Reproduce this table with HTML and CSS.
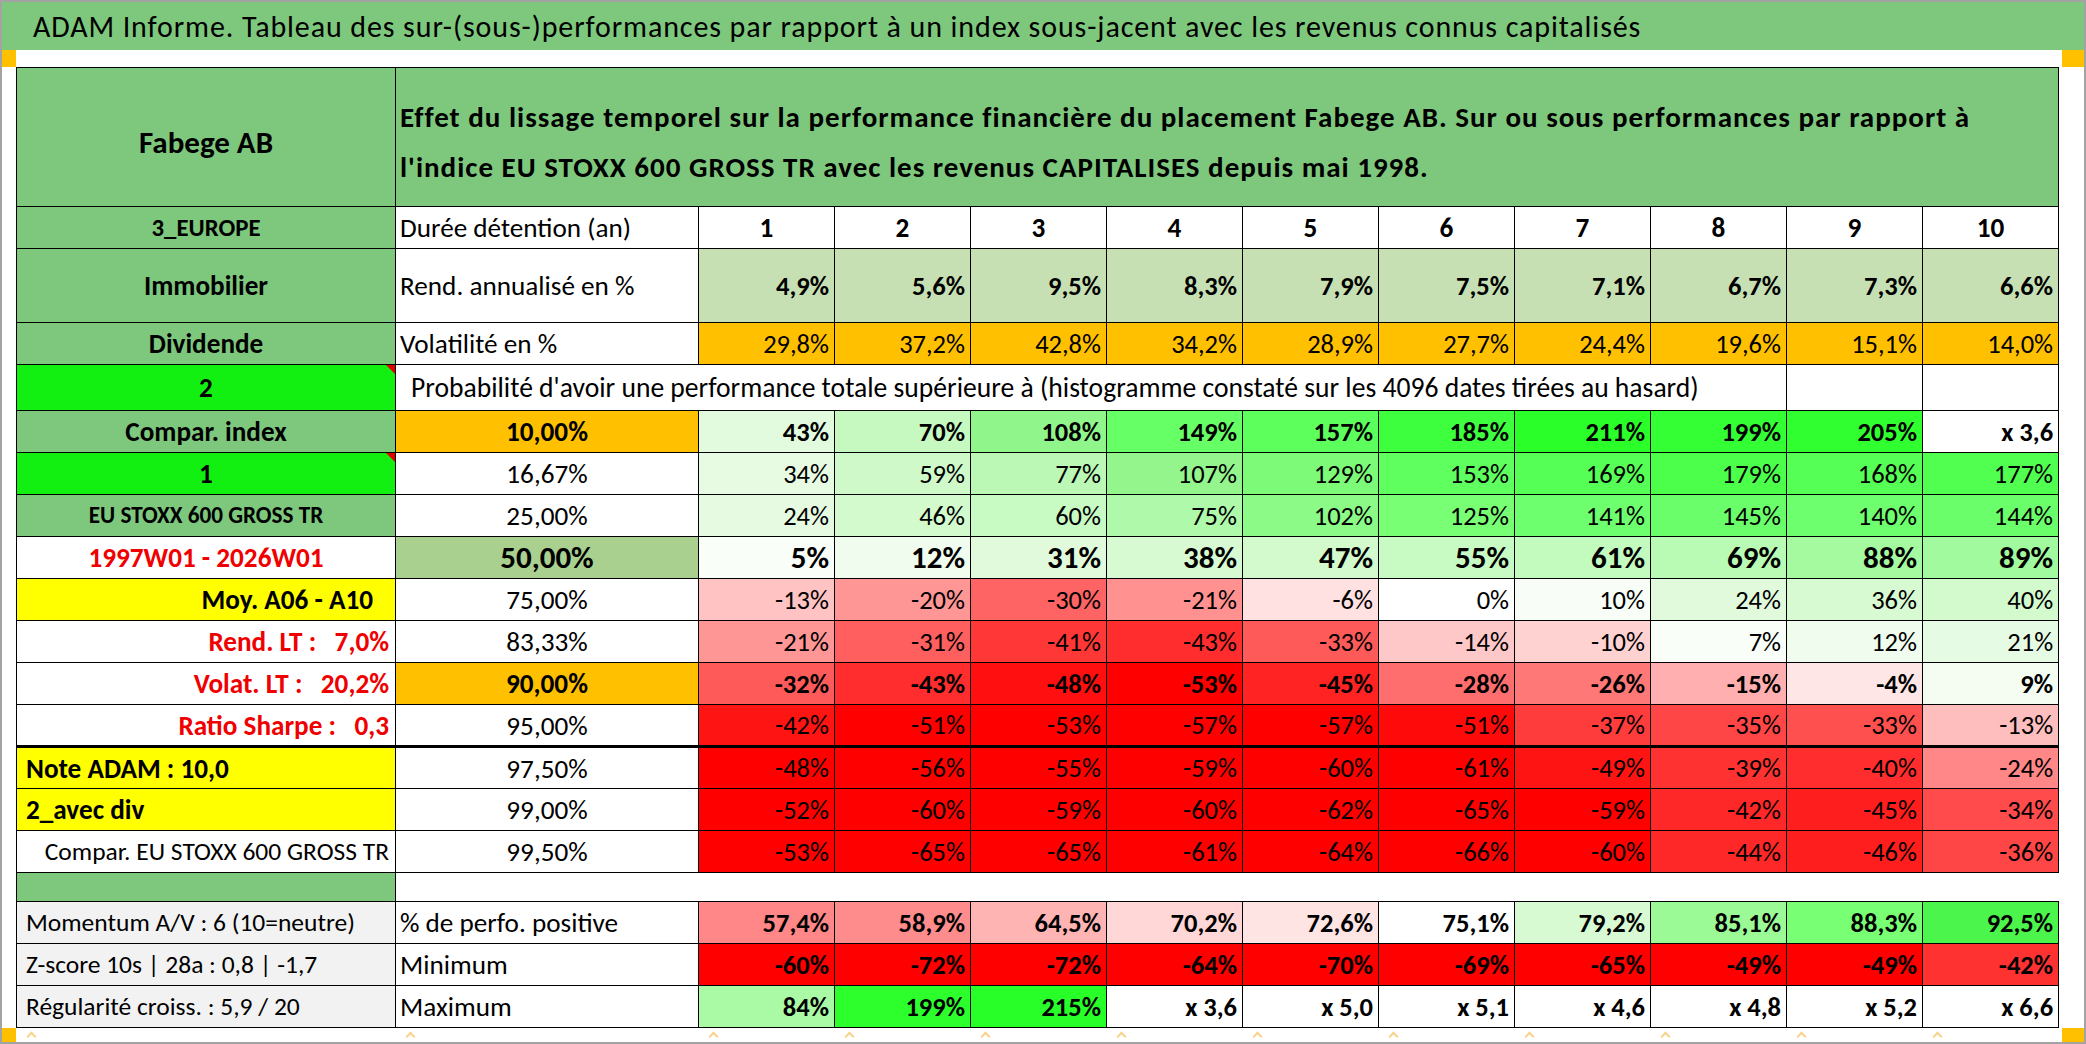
FILE: index.html
```html
<!DOCTYPE html>
<html lang="fr">
<head>
<meta charset="utf-8">
<title>ADAM Informe - Fabege AB</title>
<link rel="stylesheet" href="styles.css">
</head>
<body>
<div class="sheet">
  <div class="title">ADAM Informe. Tableau des sur-(sous-)performances par rapport à un index sous-jacent avec les revenus connus capitalisés</div>
  <div class="strip"><span class="handle"></span><span class="handle handle-r"></span></div>
  <div class="body-row">
    <table class="grid">
      <colgroup>
        <col class="c-label"><col class="c-sub">
        <col class="c-n"><col class="c-n"><col class="c-n"><col class="c-n"><col class="c-n">
        <col class="c-n"><col class="c-n"><col class="c-n"><col class="c-n"><col class="c-n">
      </colgroup>
      <tbody>
        <tr class="r-head">
          <td class="lab green b big">Fabege AB</td>
          <td class="head green b" colspan="11">Effet du lissage temporel sur la performance financière du placement Fabege AB. Sur ou sous performances par rapport à<br>l'indice EU STOXX 600 GROSS TR avec les revenus CAPITALISES depuis mai 1998.</td>
        </tr>
        <tr class="r-std">
          <td class="lab green b small2">3_EUROPE</td>
          <td class="sub">Durée détention (an)</td>
          <td class="yr">1</td><td class="yr">2</td><td class="yr">3</td><td class="yr">4</td><td class="yr">5</td>
          <td class="yr">6</td><td class="yr">7</td><td class="yr">8</td><td class="yr">9</td><td class="yr">10</td>
        </tr>
        <tr class="r-tall">
          <td class="lab green b">Immobilier</td>
          <td class="sub">Rend. annualisé en %</td>
          <td class="num b rend">4,9%</td><td class="num b rend">5,6%</td><td class="num b rend">9,5%</td><td class="num b rend">8,3%</td><td class="num b rend">7,9%</td>
          <td class="num b rend">7,5%</td><td class="num b rend">7,1%</td><td class="num b rend">6,7%</td><td class="num b rend">7,3%</td><td class="num b rend">6,6%</td>
        </tr>
        <tr class="r-std">
          <td class="lab green b">Dividende</td>
          <td class="sub">Volatilité en %</td>
          <td class="num orange">29,8%</td><td class="num orange">37,2%</td><td class="num orange">42,8%</td><td class="num orange">34,2%</td><td class="num orange">28,9%</td>
          <td class="num orange">27,7%</td><td class="num orange">24,4%</td><td class="num orange">19,6%</td><td class="num orange">15,1%</td><td class="num orange">14,0%</td>
        </tr>
        <tr class="r-prob">
          <td class="lab lime b flag">2</td>
          <td class="prob" colspan="9">Probabilité d'avoir une performance totale supérieure à (histogramme constaté sur les 4096 dates tirées au hasard)</td>
          <td></td><td></td>
        </tr>
        <tr class="r-std">
          <td class="lab green b">Compar. index</td>
          <td class="pct orange b">10,00%</td>
          <td class="num b" style="background:#E2FBDE">43%</td><td class="num b" style="background:#C6F9C0">70%</td><td class="num b" style="background:#90F58A">108%</td><td class="num b" style="background:#66FF66">149%</td><td class="num b" style="background:#5CFF5C">157%</td>
          <td class="num b" style="background:#3EFF3E">185%</td><td class="num b" style="background:#2AFF2A">211%</td><td class="num b" style="background:#34FF34">199%</td><td class="num b" style="background:#30FF30">205%</td><td class="num b">x 3,6</td>
        </tr>
        <tr class="r-std">
          <td class="lab lime b flag">1</td>
          <td class="pct">16,67%</td>
          <td class="num" style="background:#E6FBE2">34%</td><td class="num" style="background:#CFF9C9">59%</td><td class="num" style="background:#BBF7B5">77%</td><td class="num" style="background:#93F58C">107%</td><td class="num" style="background:#7DFA78">129%</td>
          <td class="num" style="background:#60FF60">153%</td><td class="num" style="background:#55FF55">169%</td><td class="num" style="background:#4BFF4B">179%</td><td class="num" style="background:#55FF55">168%</td><td class="num" style="background:#50FF50">177%</td>
        </tr>
        <tr class="r-std">
          <td class="lab green b small">EU STOXX 600 GROSS TR</td>
          <td class="pct">25,00%</td>
          <td class="num" style="background:#E6FAE1">24%</td><td class="num" style="background:#D2FACD">46%</td><td class="num" style="background:#C8FAC3">60%</td><td class="num" style="background:#AFFAAA">75%</td><td class="num" style="background:#8CFA87">102%</td>
          <td class="num" style="background:#78FF73">125%</td><td class="num" style="background:#6EFF6E">141%</td><td class="num" style="background:#6AFF6A">145%</td><td class="num" style="background:#6EFF6E">140%</td><td class="num" style="background:#6AFF6A">144%</td>
        </tr>
        <tr class="r-std">
          <td class="lab b red">1997W01 - 2026W01</td>
          <td class="pct b big mid-green">50,00%</td>
          <td class="num b big" style="background:#FAFEF9">5%</td><td class="num b big" style="background:#F0FCEE">12%</td><td class="num b big" style="background:#E1FADC">31%</td><td class="num b big" style="background:#D7FAD2">38%</td><td class="num b big" style="background:#D2FACD">47%</td>
          <td class="num b big" style="background:#C8FAC3">55%</td><td class="num b big" style="background:#C3FABE">61%</td><td class="num b big" style="background:#B9FAB4">69%</td><td class="num b big" style="background:#A5FAA0">88%</td><td class="num b big" style="background:#A2FA9E">89%</td>
        </tr>
        <tr class="r-std">
          <td class="lab yellow b right indent">Moy. A06 - A10</td>
          <td class="pct">75,00%</td>
          <td class="num" style="background:#FFC3C3">-13%</td><td class="num" style="background:#FF9696">-20%</td><td class="num" style="background:#FF6464">-30%</td><td class="num" style="background:#FF9191">-21%</td><td class="num" style="background:#FFE1E1">-6%</td>
          <td class="num" style="background:#FFFFFF">0%</td><td class="num" style="background:#F8FEF7">10%</td><td class="num" style="background:#E1FADC">24%</td><td class="num" style="background:#D7FAD2">36%</td><td class="num" style="background:#D2FACD">40%</td>
        </tr>
        <tr class="r-std">
          <td class="lab b red right">Rend. LT :   7,0%</td>
          <td class="pct">83,33%</td>
          <td class="num" style="background:#FF9696">-21%</td><td class="num" style="background:#FF5F5F">-31%</td><td class="num" style="background:#FF3737">-41%</td><td class="num" style="background:#FF2D2D">-43%</td><td class="num" style="background:#FF5A5A">-33%</td>
          <td class="num" style="background:#FFC8C8">-14%</td><td class="num" style="background:#FFD2D2">-10%</td><td class="num" style="background:#FAFEF9">7%</td><td class="num" style="background:#F0FCEE">12%</td><td class="num" style="background:#E6FBE3">21%</td>
        </tr>
        <tr class="r-std">
          <td class="lab b red right">Volat. LT :   20,2%</td>
          <td class="pct orange b">90,00%</td>
          <td class="num b" style="background:#FF5A5A">-32%</td><td class="num b" style="background:#FF2D2D">-43%</td><td class="num b" style="background:#FF0F0F">-48%</td><td class="num b" style="background:#FF0000">-53%</td><td class="num b" style="background:#FF2323">-45%</td>
          <td class="num b" style="background:#FF6E6E">-28%</td><td class="num b" style="background:#FF7878">-26%</td><td class="num b" style="background:#FFAFAF">-15%</td><td class="num b" style="background:#FFE6E6">-4%</td><td class="num b" style="background:#F5FDF3">9%</td>
        </tr>
        <tr class="r-std">
          <td class="lab b red right">Ratio Sharpe :   0,3</td>
          <td class="pct">95,00%</td>
          <td class="num" style="background:#FF1414">-42%</td><td class="num" style="background:#FF0000">-51%</td><td class="num" style="background:#FF0000">-53%</td><td class="num" style="background:#FF0000">-57%</td><td class="num" style="background:#FF0000">-57%</td>
          <td class="num" style="background:#FF0A0A">-51%</td><td class="num" style="background:#FF3C3C">-37%</td><td class="num" style="background:#FF4646">-35%</td><td class="num" style="background:#FF5050">-33%</td><td class="num" style="background:#FFBEBE">-13%</td>
        </tr>
        <tr class="r-std r-thick">
          <td class="lab yellow b left">Note ADAM : 10,0</td>
          <td class="pct">97,50%</td>
          <td class="num" style="background:#FF0000">-48%</td><td class="num" style="background:#FF0000">-56%</td><td class="num" style="background:#FF0000">-55%</td><td class="num" style="background:#FF0000">-59%</td><td class="num" style="background:#FF0000">-60%</td>
          <td class="num" style="background:#FF0000">-61%</td><td class="num" style="background:#FF1414">-49%</td><td class="num" style="background:#FF3232">-39%</td><td class="num" style="background:#FF2D2D">-40%</td><td class="num" style="background:#FF8787">-24%</td>
        </tr>
        <tr class="r-std">
          <td class="lab yellow b left">2_avec div</td>
          <td class="pct">99,00%</td>
          <td class="num" style="background:#FF0000">-52%</td><td class="num" style="background:#FF0000">-60%</td><td class="num" style="background:#FF0000">-59%</td><td class="num" style="background:#FF0000">-60%</td><td class="num" style="background:#FF0000">-62%</td>
          <td class="num" style="background:#FF0000">-65%</td><td class="num" style="background:#FF0000">-59%</td><td class="num" style="background:#FF2828">-42%</td><td class="num" style="background:#FF1E1E">-45%</td><td class="num" style="background:#FF4B4B">-34%</td>
        </tr>
        <tr class="r-std">
          <td class="lab right mid">Compar. EU STOXX 600 GROSS TR</td>
          <td class="pct">99,50%</td>
          <td class="num" style="background:#FF0000">-53%</td><td class="num" style="background:#FF0000">-65%</td><td class="num" style="background:#FF0000">-65%</td><td class="num" style="background:#FF0000">-61%</td><td class="num" style="background:#FF0000">-64%</td>
          <td class="num" style="background:#FF0000">-66%</td><td class="num" style="background:#FF0000">-60%</td><td class="num" style="background:#FF2828">-44%</td><td class="num" style="background:#FF1E1E">-46%</td><td class="num" style="background:#FF4646">-36%</td>
        </tr>
        <tr class="r-gap">
          <td class="green gap-cell"></td>
          <td class="blank" colspan="11"></td>
        </tr>
        <tr class="r-std">
          <td class="lab grey left mid">Momentum A/V : 6 (10=neutre)</td>
          <td class="sub">% de perfo. positive</td>
          <td class="num b" style="background:#FF8787">57,4%</td><td class="num b" style="background:#FF8C8C">58,9%</td><td class="num b" style="background:#FFB4B4">64,5%</td><td class="num b" style="background:#FFD7D7">70,2%</td><td class="num b" style="background:#FFE4E4">72,6%</td>
          <td class="num b" style="background:#FFFFFF">75,1%</td><td class="num b" style="background:#D7FAD2">79,2%</td><td class="num b" style="background:#9BFA96">85,1%</td><td class="num b" style="background:#78FF73">88,3%</td><td class="num b" style="background:#4BF54B">92,5%</td>
        </tr>
        <tr class="r-std">
          <td class="lab grey left mid">Z-score 10s | 28a : 0,8 | -1,7</td>
          <td class="sub">Minimum</td>
          <td class="num b" style="background:#FF0000">-60%</td><td class="num b" style="background:#FF0000">-72%</td><td class="num b" style="background:#FF0000">-72%</td><td class="num b" style="background:#FF0000">-64%</td><td class="num b" style="background:#FF0000">-70%</td>
          <td class="num b" style="background:#FF0000">-69%</td><td class="num b" style="background:#FF0000">-65%</td><td class="num b" style="background:#FF0000">-49%</td><td class="num b" style="background:#FF0000">-49%</td><td class="num b" style="background:#FF3232">-42%</td>
        </tr>
        <tr class="r-std">
          <td class="lab grey left mid">Régularité croiss. : 5,9 / 20</td>
          <td class="sub">Maximum</td>
          <td class="num b" style="background:#AAFAA5">84%</td><td class="num b" style="background:#2DFF2D">199%</td><td class="num b" style="background:#28FF28">215%</td><td class="num b">x 3,6</td><td class="num b">x 5,0</td>
          <td class="num b">x 5,1</td><td class="num b">x 4,6</td><td class="num b">x 4,8</td><td class="num b">x 5,2</td><td class="num b">x 6,6</td>
        </tr>
      </tbody>
    </table>
  </div>
  <div class="strip strip-bottom">
    <span class="handle"></span>
    <div class="ticks">
      <span class="tick"></span><span class="tick"></span><span class="tick"></span><span class="tick"></span>
      <span class="tick"></span><span class="tick"></span><span class="tick"></span><span class="tick"></span>
      <span class="tick"></span><span class="tick"></span><span class="tick"></span><span class="tick"></span>
    </div>
    <span class="handle handle-r"></span>
  </div>
</div>
</body>
</html>
```

FILE: styles.css
```css
* { box-sizing: border-box; }

html, body {
  margin: 0;
  padding: 0;
  background: #ffffff;
}

body {
  font-family: "Carlito", "Liberation Sans Narrow", "DejaVu Sans Condensed", "Open Sans", sans-serif;
  color: #000;
}

.sheet {
  width: 2086px;
  height: 1044px;
  display: flex;
  flex-direction: column;
  border: 2px solid #a3a3a3;
  overflow: hidden;
}

.title {
  height: 48px;
  background: #7ec87e;
  font-size: 30px;
  letter-spacing: 0.9px;
  line-height: 50px;
  padding-left: 31px;
  white-space: nowrap;
}

.strip {
  height: 18px;
  display: flex;
  justify-content: space-between;
}

.strip-bottom {
  height: 14px;
}

.handle {
  width: 14px;
  height: 100%;
  background: #ffc000;
  flex: none;
}

.handle-r {
  width: 22px;
}

.ticks {
  width: 2042px;
  display: grid;
  grid-template-columns: 379px 303px repeat(10, 136px);
  align-items: start;
}

.tick {
  width: 7px;
  height: 7px;
  margin: 5px 0 0 10px;
  border-top: 2px solid #f7d48a;
  border-left: 2px solid #f7d48a;
  transform: rotate(45deg);
}

.body-row {
  display: flex;
  padding-left: 14px;
  flex: 1;
}

.grid {
  border-collapse: collapse;
  table-layout: fixed;
  width: 2042px;
}

.c-label { width: 379px; }
.c-sub { width: 303px; }
.c-n { width: 136px; }

.grid td {
  border: 1px solid #000;
  padding: 0 5px;
  font-size: 27.2px;
  white-space: pre;
  overflow: hidden;
  vertical-align: middle;
  line-height: 1;
}

.r-head td { height: 139px; padding-top: 10px; }
.r-std td { height: 42px; }
.r-tall td { height: 74px; }
.r-prob td { height: 46px; }
.r-gap td { height: 29px; }

.r-thick td { border-top: 3px solid #000; }

.lab { text-align: center; }
.lab.right { text-align: right; padding-right: 6px; }
.lab.indent { padding-right: 22px; }
.lab.left { text-align: left; padding-left: 9px; }

.b { font-weight: bold; }
.grid .big { font-size: 31px; }
.grid .small { font-size: 23.2px; }
.grid .small2 { font-size: 24.8px; }
.grid .mid { font-size: 25.5px; }

.grid .head {
  font-size: 29px;
  letter-spacing: 1px;
  line-height: 50px;
  padding-left: 4px;
  white-space: nowrap;
}

.grid .sub { text-align: left; padding-left: 4px; }
.yr { text-align: center; font-weight: bold; }
.grid .num { text-align: right; padding-right: 5px; font-size: 26.5px; }
.grid .num.big { font-size: 31px; }
.pct { text-align: center; }

.grid .prob {
  font-size: 27.6px;
  padding-left: 15px;
}

.green { background: #7ec87e; }
.lime { background: #12f012; }
.orange { background: #ffc000; }
.yellow { background: #ffff00; }
.grey { background: #f2f2f2; }
.mid-green { background: #a9d08e; }
.rend { background: #c6e0b4; }
.red { color: #f00000; }

.flag { position: relative; }
.flag::after {
  content: "";
  position: absolute;
  top: 0;
  right: 0;
  border-style: solid;
  border-width: 0 9px 9px 0;
  border-color: transparent #e00000 transparent transparent;
}

.grid .blank {
  border-left: none;
  border-right: none;
}
```
